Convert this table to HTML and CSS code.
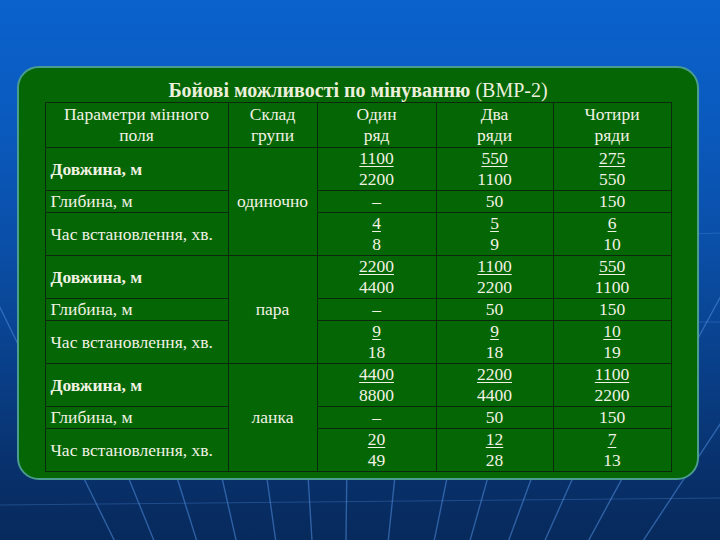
FILE: index.html
```html
<!DOCTYPE html>
<html lang="uk">
<head>
<meta charset="utf-8">
<title>Бойові можливості по мінуванню</title>
<link rel="stylesheet" href="styles.css">
</head>
<body>
<div class="slide">
  <section class="panel">
    <h1 class="title"><b>Бойові можливості по мінуванню</b> (ВМР-2)</h1>
    <table class="grid">
      <colgroup>
        <col class="c-param"><col class="c-group"><col class="c-val1"><col class="c-val2"><col class="c-val3">
      </colgroup>
      <tr class="head">
        <td>Параметри мінного<br>поля</td>
        <td>Склад<br>групи</td>
        <td>Один<br>ряд</td>
        <td>Два<br>ряди</td>
        <td>Чотири<br>ряди</td>
      </tr>
      <tr>
        <td class="label strong">Довжина, м</td>
        <td class="group" rowspan="3">одиночно</td>
        <td><u>1100</u><br>2200</td>
        <td><u>550</u><br>1100</td>
        <td><u>275</u><br>550</td>
      </tr>
      <tr>
        <td class="label">Глибина, м</td>
        <td>–</td><td>50</td><td>150</td>
      </tr>
      <tr>
        <td class="label">Час встановлення, хв.</td>
        <td><u>4</u><br>8</td>
        <td><u>5</u><br>9</td>
        <td><u>6</u><br>10</td>
      </tr>
      <tr>
        <td class="label strong">Довжина, м</td>
        <td class="group" rowspan="3">пара</td>
        <td><u>2200</u><br>4400</td>
        <td><u>1100</u><br>2200</td>
        <td><u>550</u><br>1100</td>
      </tr>
      <tr>
        <td class="label">Глибина, м</td>
        <td>–</td><td>50</td><td>150</td>
      </tr>
      <tr>
        <td class="label">Час встановлення, хв.</td>
        <td><u>9</u><br>18</td>
        <td><u>9</u><br>18</td>
        <td><u>10</u><br>19</td>
      </tr>
      <tr>
        <td class="label strong">Довжина, м</td>
        <td class="group" rowspan="3">ланка</td>
        <td><u>4400</u><br>8800</td>
        <td><u>2200</u><br>4400</td>
        <td><u>1100</u><br>2200</td>
      </tr>
      <tr>
        <td class="label">Глибина, м</td>
        <td>–</td><td>50</td><td>150</td>
      </tr>
      <tr>
        <td class="label">Час встановлення, хв.</td>
        <td><u>20</u><br>49</td>
        <td><u>12</u><br>28</td>
        <td><u>7</u><br>13</td>
      </tr>
    </table>
  </section>
</div>
</body>
</html>
```
FILE: styles.css
```css
html, body {
  margin: 0;
  padding: 0;
}

body {
  width: 720px;
  height: 540px;
  overflow: hidden;
  font-family: "Liberation Serif", "Times New Roman", Times, Tinos, "Noto Serif", "DejaVu Serif", FreeSerif, serif;
  color: #f2f2e4;
  background-color: #0a4a9e;
  background-image:
    url("data:image/svg+xml,%3Csvg xmlns='http://www.w3.org/2000/svg' width='720' height='540' viewBox='0 0 720 540'%3E%3Cdefs%3E%3CclipPath id='c'%3E%3Crect x='0' y='230' width='720' height='310'/%3E%3C/clipPath%3E%3C/defs%3E%3Cg stroke='rgb(80,140,220)' stroke-opacity='0.55' stroke-width='1.4' fill='none' clip-path='url(%23c)'%3E%3Cline x1='340' y1='1000' x2='-151' y2='0'/%3E%3Cline x1='340' y1='1000' x2='-65' y2='0'/%3E%3Cline x1='340' y1='1000' x2='28' y2='0'/%3E%3Cline x1='340' y1='1000' x2='114' y2='0'/%3E%3Cline x1='340' y1='1000' x2='200' y2='0'/%3E%3Cline x1='340' y1='1000' x2='279' y2='0'/%3E%3Cline x1='340' y1='1000' x2='353' y2='0'/%3E%3Cline x1='340' y1='1000' x2='445' y2='0'/%3E%3Cline x1='340' y1='1000' x2='545' y2='0'/%3E%3Cline x1='340' y1='1000' x2='623' y2='0'/%3E%3Cline x1='340' y1='1000' x2='707' y2='0'/%3E%3Cline x1='340' y1='1000' x2='786' y2='0'/%3E%3Cline x1='340' y1='1000' x2='881' y2='0'/%3E%3Cline x1='340' y1='1000' x2='1000' y2='0'/%3E%3C/g%3E%3Cg stroke='rgb(90,150,225)' stroke-opacity='0.3' stroke-width='1'%3E%3Cline x1='0' y1='505' x2='720' y2='498'/%3E%3Cline x1='690' y1='234' x2='720' y2='233'/%3E%3Cline x1='690' y1='322' x2='720' y2='322'/%3E%3C/g%3E%3C/svg%3E"),
    linear-gradient(180deg, #0b62cc 0%, #0a5bc0 20%, #0a4fa8 45%, #093e86 70%, #08306a 88%, #072a5c 100%);
  background-repeat: no-repeat;
}

.slide {
  padding: 66px 0 0 17px;
}

.panel {
  box-sizing: border-box;
  width: 682px;
  padding: 10px 0 6px;
  background: #046604;
  border: 2px solid #4a9c8e;
  border-radius: 22px;
}

.title {
  margin: 0;
  height: 24px;
  line-height: 24px;
  font-family: inherit;
  font-size: 20px;
  font-weight: normal;
  text-align: center;
  color: #ecefdc;
}

.title b {
  font-weight: bold;
}

.grid {
  width: 626px;
  margin: 0 auto;
  border-collapse: collapse;
  table-layout: fixed;
  font-family: inherit;
  font-size: 17.5px;
  line-height: 21px;
}

.c-param { width: 183px; }
.c-group { width: 89px; }
.c-val1 { width: 119px; }
.c-val2 { width: 117px; }
.c-val3 { width: 118px; }

.grid td {
  border: 1px solid #0b2a0b;
  padding: 0;
  text-align: center;
  vertical-align: middle;
  white-space: nowrap;
}

.grid .head td {
  padding: 1px 0;
}

.grid td.label {
  text-align: left;
  padding-left: 5px;
}

.grid td.strong {
  font-weight: bold;
}

.grid u {
  text-decoration-thickness: 1px;
  text-underline-offset: 2px;
}
```
